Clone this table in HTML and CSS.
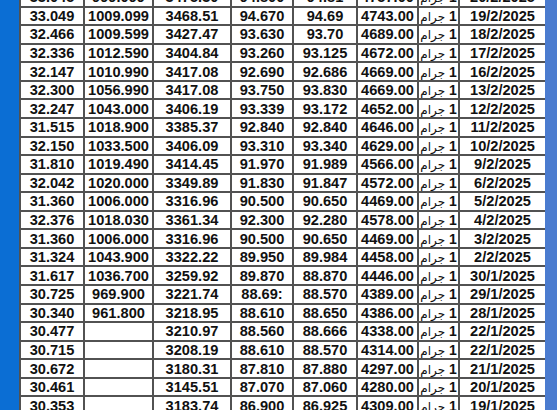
FILE: index.html
```html
<!DOCTYPE html>
<html lang="ar">
<head>
<meta charset="utf-8">
<link rel="stylesheet" href="styles.css">
</head>
<body>
<div class="page">
  <div class="side side-left"></div>
  <div class="sheet">
    <table class="grid">
      <colgroup>
        <col class="c1"><col class="c2"><col class="c3"><col class="c4"><col class="c5"><col class="c6"><col class="c7"><col class="c8">
      </colgroup>
      <tbody>
        <tr><td>33.045</td><td>999.099</td><td>3475.30</td><td>94.800</td><td>94.81</td><td>4757.00</td><td class="unit" dir="rtl">1 <span class="ar">جرام</span></td><td>20/2/2025</td></tr>
        <tr><td>33.049</td><td>1009.099</td><td>3468.51</td><td>94.670</td><td>94.69</td><td>4743.00</td><td class="unit" dir="rtl">1 <span class="ar">جرام</span></td><td>19/2/2025</td></tr>
        <tr><td>32.466</td><td>1009.599</td><td>3427.47</td><td>93.630</td><td>93.70</td><td>4689.00</td><td class="unit" dir="rtl">1 <span class="ar">جرام</span></td><td>18/2/2025</td></tr>
        <tr><td>32.336</td><td>1012.590</td><td>3404.84</td><td>93.260</td><td>93.125</td><td>4672.00</td><td class="unit" dir="rtl">1 <span class="ar">جرام</span></td><td>17/2/2025</td></tr>
        <tr><td>32.147</td><td>1010.990</td><td>3417.08</td><td>92.690</td><td>92.686</td><td>4669.00</td><td class="unit" dir="rtl">1 <span class="ar">جرام</span></td><td>16/2/2025</td></tr>
        <tr><td>32.300</td><td>1056.990</td><td>3417.08</td><td>93.750</td><td>93.830</td><td>4669.00</td><td class="unit" dir="rtl">1 <span class="ar">جرام</span></td><td>13/2/2025</td></tr>
        <tr><td>32.247</td><td>1043.000</td><td>3406.19</td><td>93.339</td><td>93.172</td><td>4652.00</td><td class="unit" dir="rtl">1 <span class="ar">جرام</span></td><td>12/2/2025</td></tr>
        <tr><td>31.515</td><td>1018.900</td><td>3385.37</td><td>92.840</td><td>92.840</td><td>4646.00</td><td class="unit" dir="rtl">1 <span class="ar">جرام</span></td><td>11/2/2025</td></tr>
        <tr><td>32.150</td><td>1033.500</td><td>3406.09</td><td>93.310</td><td>93.340</td><td>4629.00</td><td class="unit" dir="rtl">1 <span class="ar">جرام</span></td><td>10/2/2025</td></tr>
        <tr><td>31.810</td><td>1019.490</td><td>3414.45</td><td>91.970</td><td>91.989</td><td>4566.00</td><td class="unit" dir="rtl">1 <span class="ar">جرام</span></td><td>9/2/2025</td></tr>
        <tr><td>32.042</td><td>1020.000</td><td>3349.89</td><td>91.830</td><td>91.847</td><td>4572.00</td><td class="unit" dir="rtl">1 <span class="ar">جرام</span></td><td>6/2/2025</td></tr>
        <tr><td>31.360</td><td>1006.000</td><td>3316.96</td><td>90.500</td><td>90.650</td><td>4469.00</td><td class="unit" dir="rtl">1 <span class="ar">جرام</span></td><td>5/2/2025</td></tr>
        <tr><td>32.376</td><td>1018.030</td><td>3361.34</td><td>92.300</td><td>92.280</td><td>4578.00</td><td class="unit" dir="rtl">1 <span class="ar">جرام</span></td><td>4/2/2025</td></tr>
        <tr><td>31.360</td><td>1006.000</td><td>3316.96</td><td>90.500</td><td>90.650</td><td>4469.00</td><td class="unit" dir="rtl">1 <span class="ar">جرام</span></td><td>3/2/2025</td></tr>
        <tr><td>31.324</td><td>1043.900</td><td>3322.22</td><td>89.950</td><td>89.984</td><td>4458.00</td><td class="unit" dir="rtl">1 <span class="ar">جرام</span></td><td>2/2/2025</td></tr>
        <tr><td>31.617</td><td>1036.700</td><td>3259.92</td><td>89.870</td><td>88.870</td><td>4446.00</td><td class="unit" dir="rtl">1 <span class="ar">جرام</span></td><td>30/1/2025</td></tr>
        <tr><td>30.725</td><td>969.900</td><td>3221.74</td><td>88.69:</td><td>88.570</td><td>4389.00</td><td class="unit" dir="rtl">1 <span class="ar">جرام</span></td><td>29/1/2025</td></tr>
        <tr><td>30.340</td><td>961.800</td><td>3218.95</td><td>88.610</td><td>88.650</td><td>4386.00</td><td class="unit" dir="rtl">1 <span class="ar">جرام</span></td><td>28/1/2025</td></tr>
        <tr><td>30.477</td><td></td><td>3210.97</td><td>88.560</td><td>88.666</td><td>4338.00</td><td class="unit" dir="rtl">1 <span class="ar">جرام</span></td><td>22/1/2025</td></tr>
        <tr><td>30.715</td><td></td><td>3208.19</td><td>88.610</td><td>88.570</td><td>4314.00</td><td class="unit" dir="rtl">1 <span class="ar">جرام</span></td><td>22/1/2025</td></tr>
        <tr><td>30.672</td><td></td><td>3180.31</td><td>87.810</td><td>87.880</td><td>4297.00</td><td class="unit" dir="rtl">1 <span class="ar">جرام</span></td><td>21/1/2025</td></tr>
        <tr><td>30.461</td><td></td><td>3145.51</td><td>87.070</td><td>87.060</td><td>4280.00</td><td class="unit" dir="rtl">1 <span class="ar">جرام</span></td><td>20/1/2025</td></tr>
        <tr><td>30.353</td><td></td><td>3183.74</td><td>86.900</td><td>86.925</td><td>4309.00</td><td class="unit" dir="rtl">1 <span class="ar">جرام</span></td><td>19/1/2025</td></tr>
      </tbody>
    </table>
  </div>
  <div class="side side-right"></div>
</div>
</body>
</html>
```

FILE: styles.css
```css
html, body {
  margin: 0;
  padding: 0;
  background: #ffffff;
}

.page {
  display: flex;
  width: 557px;
  height: 410px;
  overflow: hidden;
}

.side {
  flex: none;
  height: 100%;
}

.side-left {
  width: 19px;
  background: #0b6ed4;
}

.side-right {
  width: 12px;
  background: #4a7bcf;
}

.sheet {
  flex: none;
  width: 526px;
  overflow: hidden;
  background: #ffffff;
}

.grid {
  border-collapse: collapse;
  table-layout: fixed;
  width: 526px;
  margin-top: -13px;
  font-family: "Liberation Sans", "DejaVu Sans", sans-serif;
  font-weight: bold;
  font-size: 14.6px;
  color: #111111;
}

.c1 { width: 64px; }
.c2 { width: 69px; }
.c3 { width: 78px; }
.c4 { width: 62px; }
.c5 { width: 64px; }
.c6 { width: 61px; }
.c7 { width: 41px; }
.c8 { width: 87px; }

.grid td {
  border: 2px solid #525252;
  height: 16.57px;
  padding: 0;
  line-height: 16px;
  text-align: center;
  white-space: nowrap;
  overflow: hidden;
  background: #ffffff;
}

.grid td.unit {
  font-size: 14px;
  text-align: center;
}

.ar {
  font-family: "DejaVu Sans", sans-serif;
  font-weight: normal;
  font-size: 12px;
  line-height: 8px;
}
```
